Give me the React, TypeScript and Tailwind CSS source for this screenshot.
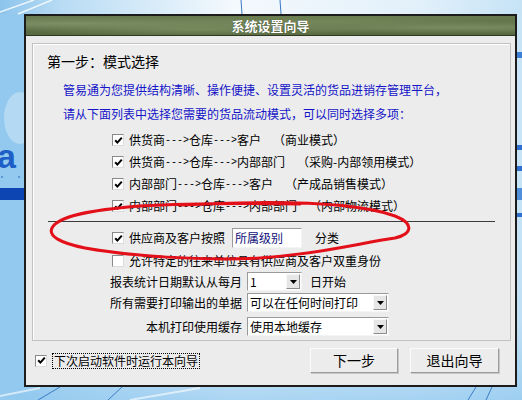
import React from "react";

const CJK = "font-['SimSun','Noto_Sans_CJK_SC',sans-serif]";

function Check({ checked = true }: { checked?: boolean }) {
  return (
    <span className="flex h-[12px] w-[12px] shrink-0 items-center justify-center border border-t-[#8a8a8a] border-l-[#8a8a8a] border-r-[#dcdcdc] border-b-[#dcdcdc] bg-white">
      {checked && (
        <svg width="9" height="9" viewBox="0 0 9 9">
          <path d="M1.2 4.2 L3.4 6.6 L7.8 1.6" stroke="#000" strokeWidth="2" fill="none" />
        </svg>
      )}
    </span>
  );
}

function Arrow() {
  return <span className="inline-block font-['Liberation_Mono',monospace] text-[10px]">---&gt;</span>;
}

function Combo({ value, w }: { value: string; w: string }) {
  return (
    <div
      className={`flex h-[19px] ${w} items-center border border-t-[#9a9a9a] border-l-[#9a9a9a] border-r-[#f4f4f4] border-b-[#f4f4f4] bg-white`}
    >
      <span className="flex-1 overflow-hidden whitespace-nowrap pl-[2px] text-[12px] leading-[17px] text-black">{value}</span>
      <span className="mr-[1px] flex h-[15px] w-[14px] shrink-0 items-center justify-center border border-t-[#f8f8f8] border-l-[#f8f8f8] border-r-[#8c8c8c] border-b-[#8c8c8c] bg-[#e6e6e6]">
        <svg width="7" height="4" viewBox="0 0 7 4">
          <path d="M0 0 H7 L3.5 4 Z" fill="#000" />
        </svg>
      </span>
    </div>
  );
}

function Button({ label }: { label: string }) {
  return (
    <button className="flex h-[25px] w-full items-center justify-center border border-t-[#fbfbfb] border-l-[#fbfbfb] border-r-[#9c9c9c] border-b-[#9c9c9c] bg-[#ececec] text-[14px] text-black shadow-[1px_1px_0_#c8c8c8]">
      {label}
    </button>
  );
}

const MODES = [
  { from: "供货商", to: "客户", note: "（商业模式）" },
  { from: "供货商", to: "内部部门", note: "（采购-内部领用模式）" },
  { from: "内部部门", to: "客户", note: "（产成品销售模式）" },
  { from: "内部部门", to: "内部部门", note: "（内部物流模式）" },
];

function Wallpaper() {
  return (
    <svg className="absolute inset-0" width="522" height="400" viewBox="0 0 522 400">
      <defs>
        <linearGradient id="wh" x1="0" y1="0" x2="1" y2="0">
          <stop offset="0" stopColor="#8cc4ec" />
          <stop offset="0.12" stopColor="#b9dcf4" />
          <stop offset="0.45" stopColor="#f4f9fd" />
          <stop offset="0.8" stopColor="#e2f0fa" />
          <stop offset="1" stopColor="#c6e3f6" />
        </linearGradient>
        <linearGradient id="wv" x1="0" y1="0" x2="0" y2="1">
          <stop offset="0" stopColor="#ffffff" stopOpacity="0" />
          <stop offset="0.8" stopColor="#9fd0f0" stopOpacity="0.2" />
          <stop offset="1" stopColor="#8cc6ee" stopOpacity="0.7" />
        </linearGradient>
      </defs>
      <rect width="522" height="400" fill="url(#wh)" />
      <rect width="522" height="400" fill="url(#wv)" />
      <rect x="0" y="14" width="24" height="386" fill="#93c9ee" />
      <ellipse cx="20" cy="118" rx="16" ry="26" fill="#b3d9f3" />
      <text x="-3" y="168" fontFamily="Liberation Sans, sans-serif" fontWeight="bold" fontSize="34" fill="#1d5fc6">
        a
      </text>
      <circle cx="2" cy="177" r="0.9" fill="#3f7fd0" />
      <circle cx="19" cy="177" r="0.9" fill="#3f7fd0" />
      <rect x="0" y="188" width="24" height="12" fill="#0d46b3" />
      <rect x="517" y="52" width="5" height="6" fill="#3c7fd4" />
      <rect x="517" y="145" width="5" height="5" fill="#2e6fd0" />
      <rect x="517" y="166" width="5" height="5" fill="#2e6fd0" />
      <rect x="517" y="188" width="5" height="12" fill="#4f8fdc" />
      <rect x="517" y="213" width="5" height="4" fill="#2e6fd0" />
      <path d="M241 0 L242 14 M280 0 L281 14" stroke="#3a78c4" strokeWidth="1" />
      <path d="M0 12 L34 0 M18 14 L52 0" stroke="#ffffff" strokeWidth="1.5" opacity="0.8" />
      <path d="M38 400 L60 387 M108 400 L122 387 M468 400 L476 387 M486 400 L492 387" stroke="#3d7cc6" strokeWidth="1" />
      <path d="M0 396 L40 388 M130 400 L200 388" stroke="#ffffff" strokeWidth="2" opacity="0.6" />
    </svg>
  );
}

export default function App() {
  return (
    <div className={`relative h-[400px] w-[522px] overflow-hidden ${CJK}`}>
      <Wallpaper />
      <div className="relative z-10 ml-[24px] pt-[14px]">
        <div className="flex h-[373px] w-[493px] flex-col border-2 border-[#1c1c1c] bg-[#ececec]">
          {/* title */}
          <div className="flex h-[20px] shrink-0 items-center justify-center border-b border-[#2e3824] bg-[radial-gradient(ellipse_at_10%_40%,#7d8f64_0%,transparent_45%),radial-gradient(ellipse_at_35%_70%,#768a5c_0%,transparent_40%),radial-gradient(ellipse_at_62%_30%,#73875a_0%,transparent_40%),radial-gradient(ellipse_at_88%_60%,#7a8c60_0%,transparent_40%),linear-gradient(180deg,#687b50_0%,#56683f_100%)]">
            <span className="text-[13px] font-bold leading-none text-white [text-shadow:0_0_1px_#1f2a14]">系统设置向导</span>
          </div>

          {/* group box */}
          <div className="ml-[6px] mr-[4px] mt-[7px] flex h-[298px] flex-col border border-[#c2c2c2] shadow-[inset_1px_1px_0_#ffffff]">
            <div className="ml-[14px] mt-[8px] flex h-[18px] items-center text-[14px] text-black">第一步：模式选择</div>
            <div className="ml-[30px] mt-[11px] flex h-[18px] items-center text-[12px] text-[#1414c8]">
              管易通为您提供结构清晰、操作便捷、设置灵活的货品进销存管理平台，
            </div>
            <div className="ml-[30px] mt-[6px] flex h-[18px] items-center text-[12px] text-[#1414c8]">
              请从下面列表中选择您需要的货品流动模式，可以同时选择多项：
            </div>

            <div className="mt-[6px] flex flex-col">
              {MODES.map((m) => (
                <div key={m.note} className="ml-[79px] flex h-[22px] items-center gap-[5px] text-[12px] text-black">
                  <Check />
                  <span className="flex items-center whitespace-nowrap">
                    {m.from}
                    <Arrow />
                    仓库
                    <Arrow />
                    {m.to}
                    <span className="ml-[12px]">{m.note}</span>
                  </span>
                </div>
              ))}
            </div>

            <div className="ml-[15px] mt-[4px] h-px w-[447px] bg-[#3c3c3c]" />

            <div className="ml-[79px] mt-[6px] flex h-[20px] items-center text-[12px] text-black">
              <Check />
              <span className="ml-[5px]">供应商及客户按照</span>
              <div className="ml-[7px] flex h-[20px] w-[70px] items-center border border-t-[#9a9a9a] border-l-[#9a9a9a] border-r-[#f4f4f4] border-b-[#f4f4f4] bg-white pl-[2px] text-[#10107a]">
                所属级别
              </div>
              <span className="ml-[13px]">分类</span>
            </div>

            <div className="ml-[79px] mt-[4px] flex h-[18px] items-center gap-[5px] text-[12px] text-black">
              <Check checked={false} />
              <span>允许特定的往来单位具有供应商及客户双重身份</span>
            </div>

            <div className="mt-[2px] flex h-[19px] items-center text-[12px] text-black">
              <span className="w-[209px] text-right">报表统计日期默认从每月</span>
              <div className="ml-[5px]">
                <Combo value="1" w="w-[55px]" />
              </div>
              <span className="ml-[8px]">日开始</span>
            </div>

            <div className="mt-[2px] flex h-[19px] items-center text-[12px] text-black">
              <span className="w-[209px] text-right">所有需要打印输出的单据</span>
              <div className="ml-[5px]">
                <Combo value="可以在任何时间打印" w="w-[142px]" />
              </div>
            </div>

            <div className="mt-[5px] flex h-[19px] items-center text-[12px] text-black">
              <span className="w-[209px] text-right">本机打印使用缓存</span>
              <div className="ml-[5px]">
                <Combo value="使用本地缓存" w="w-[142px]" />
              </div>
            </div>
          </div>

          {/* bottom bar */}
          <div className="mt-[7px] flex items-start">
            <div className="ml-[9px] mt-[5px] flex h-[15px] items-center">
              <Check />
              <span className="ml-[5px] flex h-[16px] items-center border border-dotted border-black px-[1px] text-[12px] text-black">
                下次启动软件时运行本向导
              </span>
            </div>
            <div className="ml-auto mr-[16px] flex gap-[12px]">
              <div className="w-[88px]">
                <Button label="下一步" />
              </div>
              <div className="w-[89px]">
                <Button label="退出向导" />
              </div>
            </div>
          </div>
        </div>
      </div>

      {/* red marker ellipse drawn over the dialog */}
      <svg className="pointer-events-none absolute inset-0 z-20" width="522" height="400" viewBox="0 0 522 400">
        <path
          d="M180 205 C260 201 350 200 395 216 C415 224 412 234 395 238 C360 243 320 254 260 258 C200 261 130 256 85 248 C60 243 48 236 52 228 C58 216 90 210 140 206 C190 203 240 203 300 204"
          stroke="#e3101a"
          strokeWidth="3"
          fill="none"
          strokeLinecap="round"
        />
      </svg>
    </div>
  );
}
